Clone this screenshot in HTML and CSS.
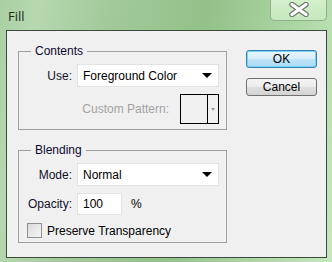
FILE: index.html
```html
<!DOCTYPE html>
<html lang="en">
<head>
  <meta charset="UTF-8" />
  <title>Fill</title>
  <link rel="stylesheet" href="styles.css">
</head>
<body>
<div class="window">
  <div class="titlebar">
    <div class="title">Fill</div>
    <div class="close-btn">
      <svg width="22" height="15" viewBox="0 0 22 15">
        <path d="M4 2.5 L18 12.5 M18 2.5 L4 12.5" stroke="#6d7670" stroke-width="5.5" stroke-linecap="round"/>
        <path d="M4 2.5 L18 12.5 M18 2.5 L4 12.5" stroke="#fff" stroke-width="3.2" stroke-linecap="round"/>
      </svg>
    </div>
  </div>
  <div class="client">
    <div class="groups">
      <fieldset class="group contents">
        <legend>Contents</legend>
        <div class="row">
          <label class="lbl">Use:</label>
          <div class="select"><span>Foreground Color</span><i class="arrow"></i></div>
        </div>
        <div class="row pattern-row">
          <label class="lbl disabled">Custom Pattern:</label>
          <div class="swatch"><div class="swatch-box"></div><div class="swatch-drop"><i class="mini-arrow"></i></div></div>
        </div>
      </fieldset>
      <fieldset class="group blending">
        <legend>Blending</legend>
        <div class="row">
          <label class="lbl">Mode:</label>
          <div class="select"><span>Normal</span><i class="arrow"></i></div>
        </div>
        <div class="row opacity-row">
          <label class="lbl">Opacity:</label>
          <div class="textbox">100</div>
          <span class="unit">%</span>
        </div>
        <div class="row check-row">
          <div class="checkbox"></div>
          <label>Preserve Transparency</label>
        </div>
      </fieldset>
    </div>
    <div class="buttons">
      <button class="btn default">OK</button>
      <button class="btn">Cancel</button>
    </div>
  </div>
</div>
</body>
</html>
```

FILE: styles.css
```css
body {
  margin: 0;
  width: 332px;
  height: 262px;
  overflow: hidden;
  font-family: 'Liberation Sans', Arial, sans-serif;
  font-size: 12px;
  color: #000;
}
.window {
  width: 332px;
  height: 262px;
  background: linear-gradient(100deg, #a9cfa2 0%, #b6d8b0 10%, #a2c99a 30%, #93c189 55%, #a8d2a0 75%, #c4e8bc 100%);
  display: flex;
  flex-direction: column;
}
.titlebar {
  height: 32px;
  display: flex;
  justify-content: space-between;
  align-items: flex-start;
}
.title {
  font-family: 'Open Sans', 'Noto Sans', sans-serif;
  font-size: 13px;
  color: #1e2a1e;
  padding: 7px 0 0 8px;
}
.close-btn {
  width: 55px;
  height: 21px;
  margin: -1px 5px 0 0;
  border: 1px solid #93ae8d;
  border-top: none;
  border-radius: 0 0 5px 5px;
  background: linear-gradient(#d4f0cc, #c6e8be);
  display: flex;
  align-items: center;
  justify-content: center;
}
.client {
  margin: 0 5px 4px 6px;
  height: 224px;
  border: 1px solid #3e4a3e;
  background: #f0f0f0;
  display: flex;
  padding: 13px 0 0 11px;
}
.groups {
  width: 209px;
  display: flex;
  flex-direction: column;
  gap: 13px;
}
.group {
  margin: 0;
  padding: 0 7px 5px 0;
  border: 1px solid #a0a0a0;
  min-width: 0;
}
.group legend {
  margin-left: 12px;
  padding: 0 4px;
  line-height: 14px;
  color: #0a0a30;
}
.blending {
  padding-bottom: 4px;
}
.row {
  display: flex;
  align-items: center;
}
.lbl {
  width: 53px;
  text-align: right;
  margin-right: 5px;
  color: #10102a;
}
.contents .row:first-of-type,
.blending .row:first-of-type {
  margin-top: 6px;
}
.select {
  flex: 1;
  height: 21px;
  background: #fff;
  border: 1px solid #e2e2e2;
  display: flex;
  align-items: center;
  justify-content: space-between;
  padding: 0 6px 0 5px;
}
.arrow {
  width: 0;
  height: 0;
  border-left: 5px solid transparent;
  border-right: 5px solid transparent;
  border-top: 5px solid #000;
}
.pattern-row {
  margin-top: 7px;
  justify-content: flex-end;
}
.lbl.disabled {
  width: auto;
  margin-right: 11px;
  color: #a3a3a3;
}
.swatch {
  width: 37px;
  height: 28px;
  border: 1px solid #000;
  display: flex;
}
.swatch-box {
  flex: 1;
  background: #f0f0f0;
}
.swatch-drop {
  width: 10px;
  border-left: 1px solid #000;
  display: flex;
  justify-content: center;
  align-items: center;
}
.mini-arrow {
  width: 0;
  height: 0;
  border-left: 2px solid transparent;
  border-right: 2px solid transparent;
  border-top: 3px solid #9a9a9a;
}
.opacity-row {
  margin-top: 7px;
}
.textbox {
  width: 38px;
  height: 20px;
  line-height: 20px;
  background: #fff;
  border: 1px solid #e2e2e2;
  padding-left: 5px;
}
.unit {
  margin-left: 9px;
}
.check-row {
  margin-top: 8px;
  padding-left: 8px;
}
.checkbox {
  width: 13px;
  height: 13px;
  border: 1px solid #8e8f8f;
  background: linear-gradient(135deg, #dcdcdc, #f6f6f6);
  margin-right: 5px;
}
.buttons {
  margin: 6px 0 0 19px;
  display: flex;
  flex-direction: column;
  gap: 10px;
}
.btn {
  width: 71px;
  height: 18px;
  padding: 0;
  font-family: 'Liberation Sans', Arial, sans-serif;
  font-size: 12px;
  color: #000;
  border: 1px solid #707070;
  border-radius: 3px;
  background: linear-gradient(#f4f4f4 0%, #ececec 50%, #dfdfdf 51%, #d4d4d4 100%);
}
.btn.default {
  border-color: #3c7fb1;
  background: linear-gradient(#eaf6fd 0%, #d6eefb 50%, #bfe4f8 51%, #a9d9f4 100%);
  box-shadow: inset 0 0 0 1px #72d4f7;
}
```
